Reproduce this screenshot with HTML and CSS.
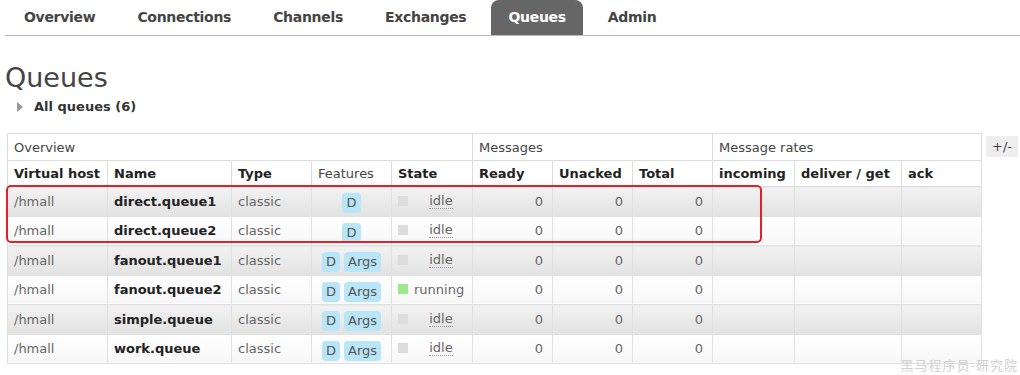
FILE: index.html
```html
<!DOCTYPE html>
<html>
<head>
    <title>Queues</title>
    <link rel="stylesheet" href="styles.css">
</head>
<body>
    <!-- Main navigation -->
    <ul class="tabs">
        <li><a href="#">Overview</a></li>
        <li><a href="#">Connections</a></li>
        <li><a href="#">Channels</a></li>
        <li><a href="#">Exchanges</a></li>
        <li class="selected"><a href="#">Queues</a></li>
        <li><a href="#">Admin</a></li>
    </ul>

    <h1>Queues</h1>
    <div class="section-toggle"><span class="arrow"></span>All queues (6)</div>

    <div class="list-wrap">
        <div class="table-box">
            <table class="list">
                <colgroup>
                    <col style="width: 100px">
                    <col style="width: 124px">
                    <col style="width: 80px">
                    <col style="width: 80px">
                    <col style="width: 81px">
                    <col style="width: 80px">
                    <col style="width: 80px">
                    <col style="width: 80px">
                    <col style="width: 82px">
                    <col style="width: 107px">
                    <col style="width: 80px">
                </colgroup>
                <thead>
                    <tr class="group-row">
                        <th colspan="5">Overview</th>
                        <th colspan="3">Messages</th>
                        <th colspan="3">Message rates</th>
                    </tr>
                    <tr class="head-row">
                        <th>Virtual host</th>
                        <th>Name</th>
                        <th>Type</th>
                        <th class="plain">Features</th>
                        <th>State</th>
                        <th>Ready</th>
                        <th>Unacked</th>
                        <th>Total</th>
                        <th>incoming</th>
                        <th>deliver / get</th>
                        <th>ack</th>
                    </tr>
                </thead>
                <tbody>
                    <tr class="alt1">
                        <td>/hmall</td>
                        <td class="name">direct.queue1</td>
                        <td>classic</td>
                        <td class="c"><span class="badge">D</span></td>
                        <td><span class="light grey"></span><abbr>idle</abbr></td>
                        <td class="r">0</td><td class="r">0</td><td class="r">0</td>
                        <td></td><td></td><td></td>
                    </tr>
                    <tr class="alt2">
                        <td>/hmall</td>
                        <td class="name">direct.queue2</td>
                        <td>classic</td>
                        <td class="c"><span class="badge">D</span></td>
                        <td><span class="light grey"></span><abbr>idle</abbr></td>
                        <td class="r">0</td><td class="r">0</td><td class="r">0</td>
                        <td></td><td></td><td></td>
                    </tr>
                    <tr class="alt1">
                        <td>/hmall</td>
                        <td class="name">fanout.queue1</td>
                        <td>classic</td>
                        <td class="c"><span class="badge">D</span> <span class="badge">Args</span></td>
                        <td><span class="light grey"></span><abbr>idle</abbr></td>
                        <td class="r">0</td><td class="r">0</td><td class="r">0</td>
                        <td></td><td></td><td></td>
                    </tr>
                    <tr class="alt2">
                        <td>/hmall</td>
                        <td class="name">fanout.queue2</td>
                        <td>classic</td>
                        <td class="c"><span class="badge">D</span> <span class="badge">Args</span></td>
                        <td><span class="light green"></span><span class="running">running</span></td>
                        <td class="r">0</td><td class="r">0</td><td class="r">0</td>
                        <td></td><td></td><td></td>
                    </tr>
                    <tr class="alt1">
                        <td>/hmall</td>
                        <td class="name">simple.queue</td>
                        <td>classic</td>
                        <td class="c"><span class="badge">D</span> <span class="badge">Args</span></td>
                        <td><span class="light grey"></span><abbr>idle</abbr></td>
                        <td class="r">0</td><td class="r">0</td><td class="r">0</td>
                        <td></td><td></td><td></td>
                    </tr>
                    <tr class="alt2">
                        <td>/hmall</td>
                        <td class="name">work.queue</td>
                        <td>classic</td>
                        <td class="c"><span class="badge">D</span> <span class="badge">Args</span></td>
                        <td><span class="light grey"></span><abbr>idle</abbr></td>
                        <td class="r">0</td><td class="r">0</td><td class="r">0</td>
                        <td></td><td></td><td></td>
                    </tr>
                </tbody>
            </table>
            <!-- annotation drawn over the first two rows -->
            <div class="highlight"></div>
        </div>
        <button class="columns-toggle">+/-</button>
    </div>

    <div class="watermark">黑马程序员-研究院</div>
</body>
</html>
```

FILE: styles.css
```css
body {
    font-family: "DejaVu Sans", Verdana, sans-serif;
    font-size: 13px;
    color: #444;
    margin: 0;
    padding: 0 0 0 5px;
    overflow: hidden;
}

.tabs {
    display: flex;
    list-style: none;
    margin: 0;
    padding: 0 0 0 2px;
    border-bottom: 1px solid #bbb;
    height: 35px;
}

.tabs li {
    margin-right: 8px;
}

.tabs a {
    display: block;
    padding: 0 17px;
    line-height: 35px;
    font-size: 14px;
    font-weight: bold;
    letter-spacing: -0.3px;
    color: #444;
    text-decoration: none;
    border-radius: 8px 8px 0 0;
}

.tabs .selected a {
    background: #666;
    color: #fff;
}

h1 {
    font-size: 27px;
    font-weight: normal;
    line-height: 32px;
    color: #444;
    margin: 26px 0 0 0;
}

.section-toggle {
    margin: 5px 0 0 12px;
    line-height: 16px;
    font-weight: bold;
    color: #333;
    display: flex;
    align-items: center;
}

.arrow {
    width: 0;
    height: 0;
    border-top: 5px solid transparent;
    border-bottom: 5px solid transparent;
    border-left: 6px solid #999;
    margin-right: 11px;
}

.list-wrap {
    display: flex;
    align-items: flex-start;
    margin: 18px 0 0 2px;
}

.table-box {
    position: relative;
}

table.list {
    border-collapse: collapse;
    table-layout: fixed;
    width: 974px;
    border: 1px solid #ddd;
}

.list th,
.list td {
    border: 1px solid #ddd;
    padding: 0 6px;
    text-align: left;
    white-space: nowrap;
    overflow: hidden;
}

.group-row th {
    height: 26px;
    font-weight: normal;
    color: #444;
}

.head-row th {
    height: 25px;
    font-weight: bold;
    color: #222;
}

.head-row th.plain {
    font-weight: normal;
    color: #444;
}

.list tbody tr {
    height: 29.5px;
}

.list td {
    color: #666;
    vertical-align: middle;
    border-color: #e0e0e0;
}

.list td.name {
    font-weight: bold;
    color: #222;
}

.list td.c {
    text-align: center;
    padding: 0;
}

.list td.r {
    text-align: right;
    padding-right: 9px;
}

.alt1 td {
    background: linear-gradient(#f2f2f2, #e2e2e2);
}

.alt2 td {
    background: linear-gradient(#fff, #f7f7f7);
}

.badge {
    display: inline-block;
    background: #b9e5f8;
    color: #555;
    border-radius: 4px;
    padding: 0 4px;
    line-height: 20px;
    margin-top: 4px;
}

.light {
    float: left;
    width: 10px;
    height: 10px;
    margin-top: 2px;
}

.light.grey {
    background: #dcdcdc;
}

.light.green {
    background: #9ee88c;
    margin-right: 6px;
}

.list abbr {
    display: block;
    text-align: center;
    text-decoration: none;
    border-bottom: 1px dotted #999;
    width: 24px;
    margin: 0 0 0 31px;
    line-height: 14px;
}

.running {
    color: #666;
}

.highlight {
    position: absolute;
    left: -1px;
    top: 52px;
    width: 752px;
    height: 54px;
    border: 2px solid #e2222b;
    border-radius: 5px;
}

.columns-toggle {
    font-family: "DejaVu Sans", Verdana, sans-serif;
    font-size: 13px;
    color: #444;
    background: #eee;
    border: none;
    padding: 0 6px;
    height: 21px;
    margin: 3px 0 0 4px;
}

.watermark {
    position: absolute;
    right: 2px;
    top: 356px;
    font-family: "Noto Sans CJK SC", sans-serif;
    font-size: 13px;
    line-height: 17px;
    color: #d0d0d0;
    letter-spacing: 1px;
}
```
